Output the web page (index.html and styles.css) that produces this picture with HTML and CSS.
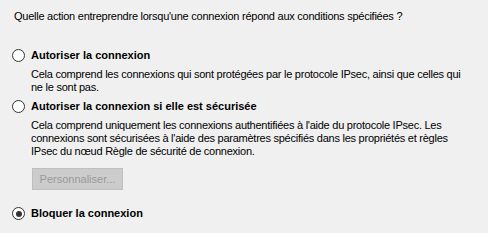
FILE: index.html
```html
<!DOCTYPE html>
<html lang="fr">
<head>
    <meta charset="UTF-8">
    <title>Action</title>
    <link rel="stylesheet" href="styles.css">
</head>
<body>
    <div class="page">
        <p class="prompt">Quelle action entreprendre lorsqu'une connexion répond aux conditions spécifiées ?</p>

        <div class="option first">
            <div class="choice">
                <span class="radio"></span>
                <span class="label">Autoriser la connexion</span>
            </div>
            <p class="desc">Cela comprend les connexions qui sont protégées par le protocole IPsec, ainsi que celles qui<br>ne le sont pas.</p>
        </div>

        <div class="option">
            <div class="choice">
                <span class="radio"></span>
                <span class="label">Autoriser la connexion si elle est sécurisée</span>
            </div>
            <p class="desc">Cela comprend uniquement les connexions authentifiées à l'aide du protocole IPsec. Les<br>connexions sont sécurisées à l'aide des paramètres spécifiés dans les propriétés et règles<br>IPsec du nœud Règle de sécurité de connexion.</p>
            <button class="btn" disabled>Personnaliser...</button>
        </div>

        <div class="option last">
            <div class="choice">
                <span class="radio checked"></span>
                <span class="label">Bloquer la connexion</span>
            </div>
        </div>
    </div>
</body>
</html>
```

FILE: styles.css
```css
body {
    margin: 0;
    background: #f0f0f0;
    font-family: "Liberation Sans", Arial, sans-serif;
    font-size: 11px;
    line-height: 13px;
    letter-spacing: -0.25px;
    color: #000;
}
.page {
    padding: 10px 0 0 14px;
}
p {
    margin: 0;
}
.prompt {
    margin-bottom: 26px;
}
.option {
    margin-bottom: 6px;
}
.option.last {
    margin-top: 17px;
}
.choice {
    display: flex;
    align-items: center;
    gap: 4px;
    margin-left: -2px;
}
.radio {
    width: 11px;
    height: 11px;
    border: 1px solid #333;
    border-radius: 50%;
    background: #fff;
    position: relative;
}
.radio.checked::after {
    content: "";
    position: absolute;
    left: 2.5px;
    top: 2.5px;
    width: 6px;
    height: 6px;
    border-radius: 50%;
    background: #333;
}
.label {
    font-weight: bold;
    letter-spacing: 0;
    margin-left: 2px;
}
.desc {
    margin: 6px 0 0 17px;
    white-space: nowrap;
}
.btn {
    display: block;
    margin: 10px 0 0 18px;
    width: 91px;
    height: 22px;
    padding: 0;
    background: #cccccc;
    border: 1px solid #bfbfbf;
    color: #9a9a9a;
    font: inherit;
}
```
